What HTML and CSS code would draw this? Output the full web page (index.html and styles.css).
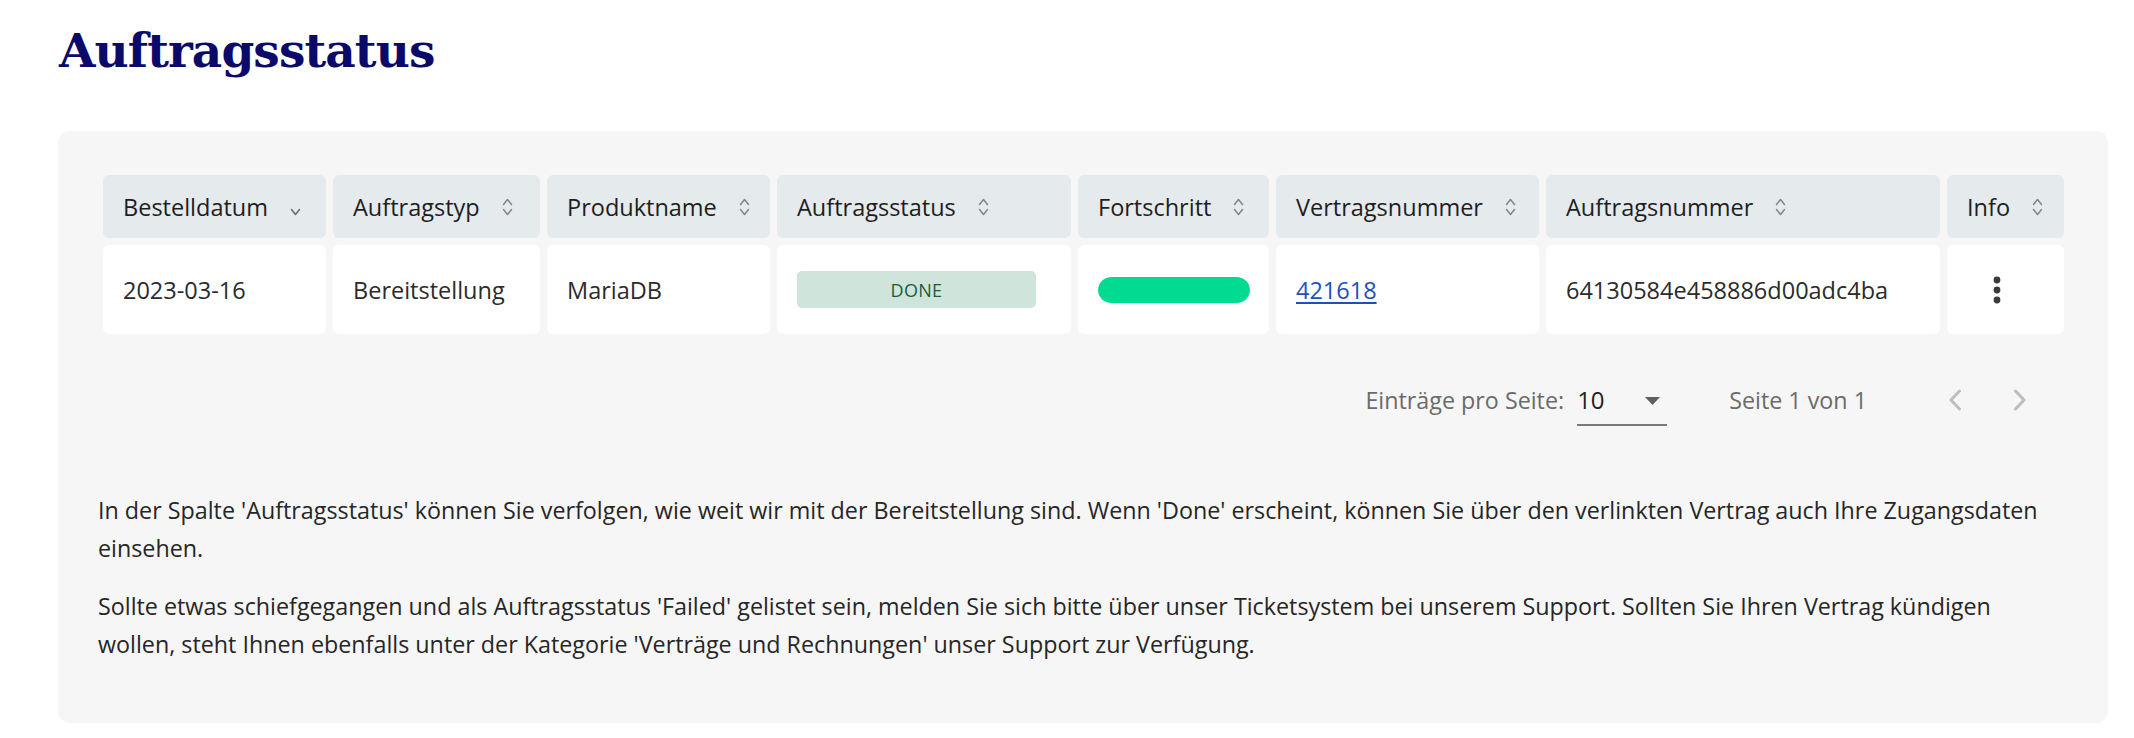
FILE: index.html
```html
<!DOCTYPE html>
<html lang="de">
<head>
<meta charset="utf-8">
<title>Auftragsstatus</title>
<link rel="stylesheet" href="styles.css">
</head>
<body>
<main class="page">
  <h1 class="title">Auftragsstatus</h1>
  <section class="card">
    <div class="grid" role="table">
      <div class="th"><span>Bestelldatum</span><svg class="sort active" viewBox="0 0 11 20" width="11" height="20"><path d="M1.5 12.5 L5.5 17.5 L9.5 12.5"/></svg></div>
      <div class="th"><span>Auftragstyp</span><svg class="sort" viewBox="0 0 11 20" width="11" height="20"><path d="M1.5 7.5 L5.5 2.5 L9.5 7.5"/><path d="M1.5 12.5 L5.5 17.5 L9.5 12.5"/></svg></div>
      <div class="th"><span>Produktname</span><svg class="sort" viewBox="0 0 11 20" width="11" height="20"><path d="M1.5 7.5 L5.5 2.5 L9.5 7.5"/><path d="M1.5 12.5 L5.5 17.5 L9.5 12.5"/></svg></div>
      <div class="th"><span>Auftragsstatus</span><svg class="sort" viewBox="0 0 11 20" width="11" height="20"><path d="M1.5 7.5 L5.5 2.5 L9.5 7.5"/><path d="M1.5 12.5 L5.5 17.5 L9.5 12.5"/></svg></div>
      <div class="th"><span>Fortschritt</span><svg class="sort" viewBox="0 0 11 20" width="11" height="20"><path d="M1.5 7.5 L5.5 2.5 L9.5 7.5"/><path d="M1.5 12.5 L5.5 17.5 L9.5 12.5"/></svg></div>
      <div class="th"><span>Vertragsnummer</span><svg class="sort" viewBox="0 0 11 20" width="11" height="20"><path d="M1.5 7.5 L5.5 2.5 L9.5 7.5"/><path d="M1.5 12.5 L5.5 17.5 L9.5 12.5"/></svg></div>
      <div class="th"><span>Auftragsnummer</span><svg class="sort" viewBox="0 0 11 20" width="11" height="20"><path d="M1.5 7.5 L5.5 2.5 L9.5 7.5"/><path d="M1.5 12.5 L5.5 17.5 L9.5 12.5"/></svg></div>
      <div class="th"><span>Info</span><svg class="sort" viewBox="0 0 11 20" width="11" height="20"><path d="M1.5 7.5 L5.5 2.5 L9.5 7.5"/><path d="M1.5 12.5 L5.5 17.5 L9.5 12.5"/></svg></div>

      <div class="td">2023-03-16</div>
      <div class="td">Bereitstellung</div>
      <div class="td">MariaDB</div>
      <div class="td"><span class="badge">DONE</span></div>
      <div class="td"><div class="progress"><div class="progress-fill" style="width:100%"></div></div></div>
      <div class="td"><a class="link" href="#">421618</a></div>
      <div class="td">64130584e458886d00adc4ba</div>
      <div class="td td-info"><button class="kebab" type="button" aria-label="Mehr"><svg viewBox="0 0 8 28" width="8" height="28"><circle cx="4" cy="4" r="3.4"/><circle cx="4" cy="14" r="3.4"/><circle cx="4" cy="24" r="3.4"/></svg></button></div>
    </div>

    <div class="pager">
      <span class="pager-label">Einträge pro Seite:</span>
      <div class="select"><span class="select-value">10</span><svg viewBox="0 0 15 8" width="15" height="8"><polygon points="0,0 15,0 7.5,8"/></svg></div>
      <span class="pager-range">Seite 1 von 1</span>
      <button class="nav" type="button" aria-label="Zurück"><svg viewBox="0 0 14 22" width="14" height="22"><path d="M11.5 2 L3 11 L11.5 20"/></svg></button>
      <button class="nav" type="button" aria-label="Weiter"><svg viewBox="0 0 14 22" width="14" height="22"><path d="M2.5 2 L11 11 L2.5 20"/></svg></button>
    </div>

    <div class="info">
      <p>In der Spalte 'Auftragsstatus' können Sie verfolgen, wie weit wir mit der Bereitstellung sind. Wenn 'Done' erscheint, können Sie über den verlinkten Vertrag auch Ihre Zugangsdaten einsehen.</p>
      <p>Sollte etwas schiefgegangen und als Auftragsstatus 'Failed' gelistet sein, melden Sie sich bitte über unser Ticketsystem bei unserem Support. Sollten Sie Ihren Vertrag kündigen wollen, steht Ihnen ebenfalls unter der Kategorie 'Verträge und Rechnungen' unser Support zur Verfügung.</p>
    </div>
  </section>
</main>
</body>
</html>
```

FILE: styles.css
```css
html, body {
  margin: 0;
  padding: 0;
  background: #ffffff;
}

body {
  font-family: "Open Sans", "Noto Sans", "Liberation Sans", sans-serif;
  color: #262626;
}

.page {
  padding: 23px 26px 0 58px;
}

.title {
  margin: 0 0 53px 0;
  font-family: "DejaVu Serif", serif;
  font-weight: 700;
  font-size: 47px;
  line-height: 55px;
  letter-spacing: -0.9px;
  color: #0b0a6b;
  padding-left: 1px;
}

.card {
  background: #f6f6f6;
  border-radius: 12px;
  padding: 44px 44px 60px 45px;
}

.grid {
  display: grid;
  grid-template-columns: 223px 207px 223px 294px 191px 263px 394px 117px;
  grid-template-rows: 63px 89px;
  gap: 7px;
}

.th, .td {
  display: flex;
  align-items: center;
  padding: 0 19px 0 20px;
  border-radius: 6px;
  font-size: 23.5px;
  white-space: nowrap;
}

.th {
  background: #e5eaed;
  color: #1e1e1e;
  gap: 22px;
}

.td {
  background: #ffffff;
  color: #2b2b2b;
}

.sort {
  flex: none;
  fill: none;
  stroke: #858585;
  stroke-width: 1.5;
  stroke-linecap: round;
  stroke-linejoin: round;
  margin-top: 1px;
}

.sort.active {
  stroke: #6a6a6a;
}

.badge {
  display: flex;
  align-items: center;
  justify-content: center;
  width: 239px;
  height: 37px;
  border-radius: 5px;
  background: #cfe5db;
  color: #1d5b3b;
  font-size: 18px;
  letter-spacing: 0.3px;
}

.progress {
  flex: 1;
  height: 26px;
  border-radius: 13px;
  background: #e3e3e3;
  overflow: hidden;
}

.progress-fill {
  height: 100%;
  border-radius: 13px;
  background: #00db92;
}

.link {
  color: #1f4fbf;
  text-decoration: underline;
  text-underline-offset: 3px;
  text-decoration-thickness: 1.5px;
}

.td-info {
  padding-left: 20px;
}

.kebab {
  width: 60px;
  height: 40px;
  border: 0;
  padding: 0;
  background: transparent;
  display: flex;
  align-items: center;
  justify-content: center;
  fill: #3a3a3a;
}

.pager {
  display: flex;
  align-items: flex-start;
  justify-content: flex-end;
  margin-top: 51px;
  padding-right: 20px;
  font-size: 23.3px;
  line-height: 30px;
  color: #6b6b6b;
}

.pager-label {
  margin-right: 13px;
}

.select {
  width: 90px;
  height: 41px;
  box-sizing: border-box;
  border-bottom: 2px solid #7a7a7a;
  display: flex;
  align-items: flex-start;
  justify-content: space-between;
  padding-right: 7px;
}

.select-value {
  color: #222222;
  font-size: 24px;
}

.select svg {
  fill: #5f5f5f;
  margin-top: 12px;
}

.pager-range {
  margin-left: 62px;
  margin-right: 64px;
}

.nav {
  width: 48px;
  height: 30px;
  border: 0;
  padding: 0;
  background: transparent;
  display: flex;
  align-items: center;
  justify-content: center;
  fill: none;
  stroke: #bdbdbd;
  stroke-width: 3;
  stroke-linecap: round;
  stroke-linejoin: round;
}

.nav + .nav {
  margin-left: 17px;
}

.info {
  margin-top: 65px;
  margin-left: -5px;
}

.info p {
  margin: 0;
  font-size: 23.3px;
  line-height: 38px;
  color: #262626;
}

.info p + p {
  margin-top: 20px;
}
```
